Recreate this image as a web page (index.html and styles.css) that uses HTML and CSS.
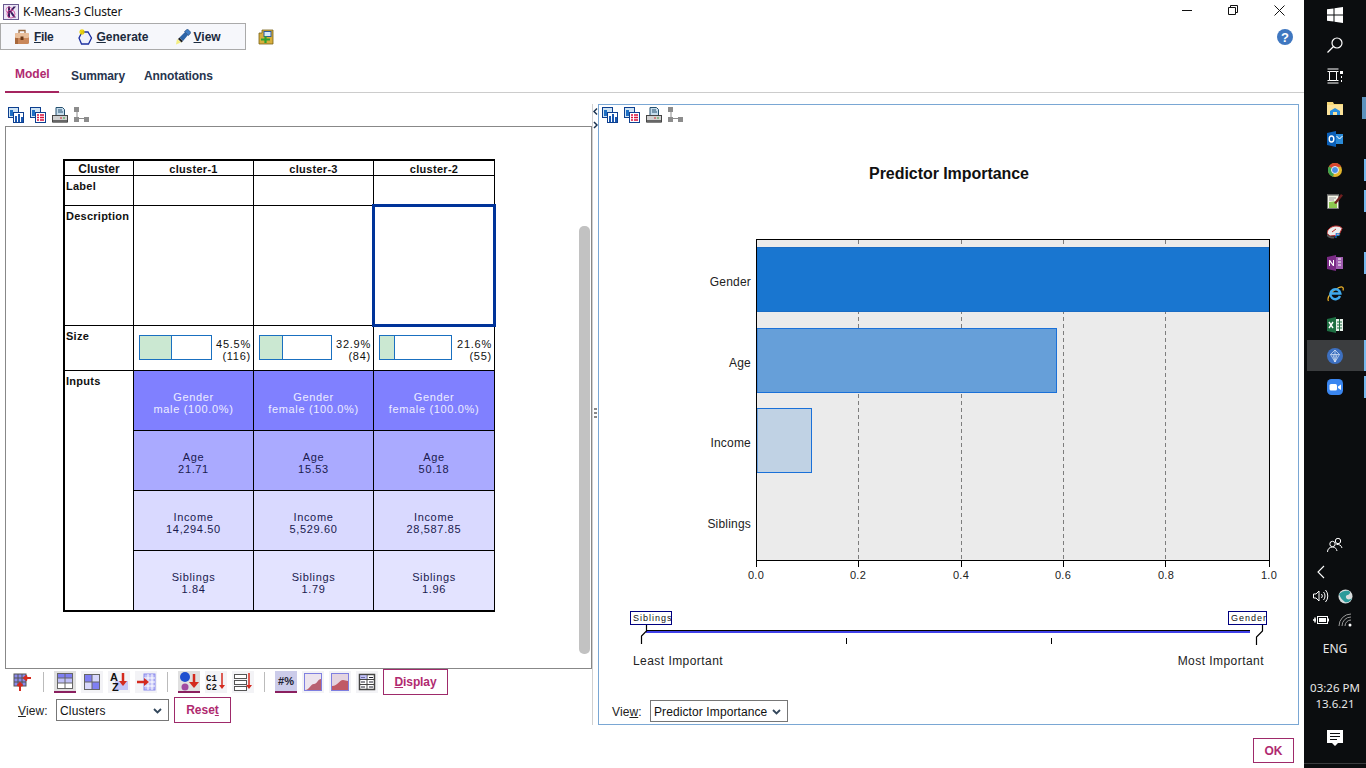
FILE: index.html
```html
<!DOCTYPE html>
<html lang="en">
<head>
<meta charset="utf-8">
<title>K-Means-3 Cluster</title>
<link rel="stylesheet" href="styles.css">
</head>
<body>
<svg class="defs" width="0" height="0">
  <symbol id="i-chart" viewBox="0 0 16 16">
    <rect x=".5" y=".5" width="10" height="10" fill="#cfe4f4" stroke="#0d3f8f"/>
    <rect x="2" y="3" width="3" height="6" fill="#1e6fc4"/>
    <rect x="5.500" y="5.500" width="10" height="10" fill="#fff" stroke="#0d3f8f"/>
    <rect x="7" y="9" width="2" height="6" fill="#1a58b0"/><rect x="10" y="7" width="2" height="8" fill="#1a58b0"/><rect x="13" y="10" width="2" height="5" fill="#1a58b0"/>
  </symbol>
  <symbol id="i-table" viewBox="0 0 16 16">
    <rect x=".5" y=".5" width="10" height="10" fill="#cfe4f4" stroke="#0d3f8f"/>
    <rect x="2" y="3" width="3" height="6" fill="#1e6fc4"/>
    <rect x="5.500" y="5.500" width="10" height="10" fill="#fff" stroke="#0d3f8f"/>
    <path d="M7 8h2M10 8h4M7 10.500h2M10 10.500h4M7 13h2M10 13h4" stroke="#d8103c" stroke-width="1.500"/>
  </symbol>
  <symbol id="i-print" viewBox="0 0 16 16">
    <path d="M4 .5h6.500l2 2v6H4z" fill="#c6dcec" stroke="#24506f"/>
    <path d="M6 3h4M6 5h5" stroke="#24506f"/>
    <rect x=".5" y="8.500" width="15" height="6.500" fill="#d0d0d0" stroke="#444"/>
    <rect x="1" y="13" width="14" height="2.500" fill="#666"/>
    <path d="M8 11h2" stroke="#d03030"/><path d="M11 11h2" stroke="#40a040"/>
  </symbol>
  <symbol id="i-tree" viewBox="0 0 16 16">
    <path d="M3 3v10M3 11.500h10" stroke="#8c8c8c" fill="none"/>
    <rect x="0" y="0" width="5" height="5" fill="#8c8c8c"/><rect x="0" y="10" width="5" height="5" fill="#8c8c8c"/><rect x="10" y="10" width="5" height="5" fill="#8c8c8c"/>
  </symbol>
  <symbol id="i-area" viewBox="0 0 22 22">
    <rect x="2.500" y="2.500" width="17" height="17" fill="#ece4ee" stroke="#7f7fe0"/>
    <path d="M3 19c5 0 5-6 9-6 3 0 4-5 7-5v11z" fill="#b86070"/>
  </symbol>
  <symbol id="i-area2" viewBox="0 0 22 22">
    <rect x="2.500" y="2.500" width="17" height="17" fill="#e4d4e0" stroke="#7f7fe0"/>
    <path d="M3 19V15c6 0 7-6 11-6 2 0 3 1 5 1v9z" fill="#c05a66"/>
  </symbol>
</svg>

<div class="app">
  <header class="titlebar">
    <svg class="app-icon" width="16" height="16" viewBox="0 0 16 16"><rect x=".5" y=".5" width="15" height="15" fill="#ece6f6" stroke="#6a5a90"/><path d="M5 2.500h2v4.500l3.500-4.500H13L8.800 7.500 13 13.500h-2.500L7 8.500v5H5z" fill="#3a2060"/><circle cx="8" cy="10" r="4" fill="none" stroke="#d04090" stroke-width=".8"/><circle cx="6" cy="6" r="3" fill="none" stroke="#d04090" stroke-width=".6"/></svg>
    <span class="title-text">K-Means-3 Cluster</span>
    <div class="win-controls">
      <span class="win-btn"><svg width="10" height="10" viewBox="0 0 10 10"><path d="M0 5.500h10" stroke="#111"/></svg></span>
      <span class="win-btn"><svg width="10" height="10" viewBox="0 0 10 10"><path d="M2.500 2V.5h7v7H8M.5 2.500h7v7h-7z" fill="none" stroke="#111"/></svg></span>
      <span class="win-btn"><svg width="11" height="11" viewBox="0 0 11 11"><path d="M.5.5l10 10M10.500.5l-10 10" stroke="#111"/></svg></span>
    </div>
  </header>

  <div class="menurow">
    <nav class="menubox">
      <span class="menu-item menu-file">
        <svg width="16" height="16" viewBox="0 0 16 16"><path d="M5 5V1.500h6V5" fill="none" stroke="#9a6a40" stroke-width="1.300"/><rect x="1" y="4" width="14" height="11" rx="1.500" fill="#c9875a"/><rect x="1" y="4" width="14" height="5" rx="1.500" fill="#e9bf9c"/><rect x="6.500" y="7.500" width="3" height="3.500" fill="#6a3a18"/><rect x="1" y="9" width="3" height="6" fill="#a8683c"/></svg>
        <span><u>F</u>ile</span>
      </span>
      <span class="menu-item menu-gen">
        <svg width="16" height="16" viewBox="0 0 16 16"><path d="M5 3h6l3.500 6-3 6H4.500L2 9z" fill="#eef1fb" stroke="#1b2fa0" stroke-width="1.300"/><path d="M5 0v6M2 3h6M3 1l4 4M7 1L3 5" stroke="#e8d000" stroke-width="1.100"/></svg>
        <span><u>G</u>enerate</span>
      </span>
      <span class="menu-item">
        <svg width="16" height="16" viewBox="0 0 16 16"><path d="M1 15.500L2 10l4 3.500z" fill="#f4ee80"/><path d="M3 10l3.500 3.500 1.500-1.500-3.500-3.500z" fill="#222"/><path d="M4.500 8.500L10 3l3 3-5 6z" fill="#2c64a8"/><path d="M9.500 2.500L12.500 0 16 3.500l-2.500 3z" fill="#3d7cc4" stroke="#183c70" stroke-width=".6"/></svg>
        <span><u>V</u>iew</span>
      </span>
    </nav>
    <svg class="add-icon" width="16" height="16" viewBox="0 0 16 16"><path d="M1 4h3V1h11v14H1z" fill="#d8ae3c" stroke="#7a6218" stroke-width=".8"/><rect x="6" y="2.500" width="7" height="5" fill="#d8eaf8" stroke="#2a5aa0"/><path d="M3 10.500h9M7.500 7v7" stroke="#2ea030" stroke-width="2.200"/></svg>
    <svg class="help-icon" width="16" height="16" viewBox="0 0 16 16"><circle cx="8" cy="8" r="8" fill="#3f77c0"/><text x="8" y="12.500" class="help-mark">?</text></svg>
  </div>

  <div class="tabs">
    <span class="tab tab-active">Model</span>
    <span class="tab">Summary</span>
    <span class="tab tab-last">Annotations</span>
  </div>

  <main class="workspace">
    <section class="left-col">
      <div class="view-tools">
        <svg class="ti"><use href="#i-chart"/></svg>
        <svg class="ti"><use href="#i-table"/></svg>
        <svg class="ti"><use href="#i-print"/></svg>
        <svg class="ti"><use href="#i-tree"/></svg>
      </div>
      <div class="frame">
        <div class="cluster-grid">
          <div class="c hd hd-main">Cluster</div>
          <div class="c hd">cluster-1</div>
          <div class="c hd">cluster-3</div>
          <div class="c hd">cluster-2</div>

          <div class="c rowname">Label</div>
          <div class="c"></div><div class="c"></div><div class="c"></div>

          <div class="c rowname">Description</div>
          <div class="c"></div><div class="c"></div><div class="c selected"></div>

          <div class="c rowname">Size</div>
          <div class="c size"><div class="sizebar"><div class="sizefill" style="width:45.5%"></div></div><div class="sizetext">45.5%<br>(116)</div></div>
          <div class="c size"><div class="sizebar"><div class="sizefill" style="width:32.9%"></div></div><div class="sizetext">32.9%<br>(84)</div></div>
          <div class="c size"><div class="sizebar"><div class="sizefill" style="width:21.6%"></div></div><div class="sizetext">21.6%<br>(55)</div></div>

          <div class="c rowname inputs-name">Inputs</div>
          <div class="c val v1">Gender<br>male (100.0%)</div>
          <div class="c val v1">Gender<br>female (100.0%)</div>
          <div class="c val v1">Gender<br>female (100.0%)</div>
          <div class="c val v2">Age<br>21.71</div>
          <div class="c val v2">Age<br>15.53</div>
          <div class="c val v2">Age<br>50.18</div>
          <div class="c val v3">Income<br>14,294.50</div>
          <div class="c val v3">Income<br>5,529.60</div>
          <div class="c val v3">Income<br>28,587.85</div>
          <div class="c val v4">Siblings<br>1.84</div>
          <div class="c val v4">Siblings<br>1.79</div>
          <div class="c val v4">Siblings<br>1.96</div>
        </div>
        <div class="scrollbar"></div>
      </div>

      <div class="bar-tools">
        <span class="tb"><svg width="18" height="18" viewBox="0 0 18 18"><rect x="1" y="1" width="12" height="12" fill="#8a8aec" stroke="#555"/><path d="M5 1v12M9 1v12M1 5h12M1 9h12" stroke="#555"/><path d="M18 5h-6M14 2.500L11 5l3 2.500M7 18v-7M4.500 13L7 10l2.500 3" stroke="#d42a1e" stroke-width="2" fill="none"/></svg></span>
        <span class="tsep"></span>
        <span class="tb tb-on"><svg width="18" height="18" viewBox="0 0 18 18"><rect x="1.500" y="1.500" width="15" height="15" fill="#fff" stroke="#666"/><rect x="2" y="2" width="14" height="4" fill="#7f7ff2"/><rect x="2" y="6" width="14" height="5" fill="#c0c0f8"/><path d="M1.500 6h15M1.500 11h15M9 1.500v15" stroke="#666"/></svg></span>
        <span class="tb"><svg width="18" height="18" viewBox="0 0 18 18"><rect x="1.500" y="1.500" width="15" height="15" fill="#d8d8fc" stroke="#666"/><rect x="2" y="2" width="7" height="7" fill="#7f7ff2"/><rect x="9" y="9" width="7" height="7" fill="#7f7ff2"/><path d="M1.500 9h15M9 1.500v15" stroke="#666"/></svg></span>
        <span class="tb"><svg width="20" height="20" viewBox="0 0 20 20"><rect x="6" y="9" width="13" height="9" fill="#c4c4f6"/><text x="1" y="9" class="tb-txt-lg">A</text><text x="3" y="19" class="tb-txt-lg">Z</text><path d="M14 1v11" stroke="#d42a1e" stroke-width="2.500"/><path d="M10 9l4 5 4-5z" fill="#d42a1e"/></svg></span>
        <span class="tb"><svg width="20" height="20" viewBox="0 0 20 20"><rect x="8" y="2" width="11" height="16" fill="#bfbff6" stroke="#8a8aec"/><path d="M8 6h11M8 10h11M8 14h11M12 2v16M16 2v16" stroke="#fff"/><path d="M1 10h10" stroke="#d42a1e" stroke-width="2.500"/><path d="M8 6l5 4-5 4z" fill="#d42a1e"/></svg></span>
        <span class="tsep"></span>
        <span class="tb tb-on"><svg width="20" height="20" viewBox="0 0 20 20"><circle cx="6" cy="6" r="5" fill="#2050d0"/><circle cx="6" cy="16" r="3.500" fill="#a04aa0"/><path d="M15 3v10" stroke="#d42a1e" stroke-width="2.500"/><path d="M10 11l5 6 5-6z" fill="#d42a1e"/></svg></span>
        <span class="tb"><svg width="20" height="20" viewBox="0 0 20 20"><text x="0" y="9" class="tb-txt">C1</text><text x="0" y="18" class="tb-txt">C2</text><path d="M16 1v14" stroke="#d42a1e" stroke-width="1.500"/><path d="M13 13l3 4 3-4z" fill="#d42a1e"/></svg></span>
        <span class="tb"><svg width="20" height="20" viewBox="0 0 20 20"><g fill="#fff" stroke="#555"><rect x="1.500" y="2.500" width="12" height="4"/><rect x="1.500" y="8.500" width="12" height="4"/><rect x="1.500" y="14.500" width="12" height="4"/></g><path d="M16 1v14" stroke="#d42a1e" stroke-width="1.500"/><path d="M13 13l3 4 3-4z" fill="#d42a1e"/></svg></span>
        <span class="tsep"></span>
        <span class="tb tb-on tb-pct"><span class="pct">#%</span></span>
        <span class="tb"><svg width="22" height="22"><use href="#i-area"/></svg></span>
        <span class="tb"><svg width="22" height="22"><use href="#i-area2"/></svg></span>
        <span class="tb"><svg width="20" height="20" viewBox="0 0 20 20"><rect x="2.500" y="2.500" width="15" height="15" fill="#fff" stroke="#444" stroke-width="1.500"/><path d="M10 3v14M3 7.500h14M3 12.500h14" stroke="#444"/><path d="M4 5.500h4M12 5.500h4M4 10h4M12 10h4M4 15h4M12 15h4" stroke="#223"/><rect x="3" y="3" width="7" height="4" fill="#9a9af0" opacity=".6"/></svg></span>
        <button class="btn btn-display"><u>D</u>isplay</button>
      </div>
      <div class="view-row">
        <span class="view-label"><u>V</u>iew:</span>
        <div class="select select-left"><span>Clusters</span><svg width="9" height="6" viewBox="0 0 9 6"><path d="M1 1l3.500 3.500L8 1" fill="none" stroke="#33475b" stroke-width="1.800"/></svg></div>
        <button class="btn btn-reset">Rese<u>t</u></button>
      </div>
    </section>

    <div class="splitter">
      <svg class="split-arrows" width="5" height="25" viewBox="0 0 5 25"><path d="M4 4.500L1 7.500l3 3M1 18l3 3-3 3" fill="none" stroke="#1b3350" stroke-width="1.500"/></svg>
      <div class="grip"></div>
    </div>

    <section class="right-panel">
      <div class="view-tools view-tools-r">
        <svg class="ti"><use href="#i-chart"/></svg>
        <svg class="ti"><use href="#i-table"/></svg>
        <svg class="ti"><use href="#i-print"/></svg>
        <svg class="ti"><use href="#i-tree"/></svg>
      </div>
      <svg class="chart" width="699" height="565" viewBox="599 130 699 565">
        <text x="949" y="179" class="chart-title">Predictor Importance</text>
        <rect x="756.500" y="239.500" width="513" height="321" fill="#ebebeb"/>
        <path d="M858.500 240v320M961.500 240v320M1063.500 240v320M1165.500 240v320" stroke="#7d7d7d" stroke-dasharray="4 3"/>
        <rect x="757" y="247.500" width="512" height="64" fill="#1976d0" stroke="#1a6cc4"/>
        <rect x="757" y="328.500" width="299.500" height="64" fill="#669fd9" stroke="#1a70d8"/>
        <rect x="757" y="408.500" width="54.500" height="64" fill="#c0d2e4" stroke="#1a70d8"/>
        <rect x="756.500" y="239.500" width="513" height="321" fill="none" stroke="#000"/>
        <path d="M756.500 560v7M858.500 560v7M961.500 560v7M1063.500 560v7M1165.500 560v7M1269.500 560v7" stroke="#000"/>
        <g class="cat">
          <text x="751" y="286">Gender</text>
          <text x="751" y="367">Age</text>
          <text x="751" y="447">Income</text>
          <text x="751" y="528">Siblings</text>
        </g>
        <g class="axis">
          <text x="756" y="579">0.0</text>
          <text x="858" y="579">0.2</text>
          <text x="961" y="579">0.4</text>
          <text x="1063" y="579">0.6</text>
          <text x="1166" y="579">0.8</text>
          <text x="1269" y="579">1.0</text>
        </g>
        <rect x="646" y="630" width="604" height="1" fill="#000"/>
        <rect x="646" y="631" width="604" height="2" fill="#4040e8"/>
        <path d="M846.500 638v6M1051.500 638v6" stroke="#000"/>
        <path d="M646.500 625v6l-5 5v8M1262.500 625v6l-6 6v8" fill="none" stroke="#000" stroke-width="1.200"/>
        <rect x="630.500" y="611.500" width="41" height="13" fill="#fff" stroke="#000080"/>
        <text x="633" y="621" class="tag">Siblings</text>
        <rect x="1228.500" y="611.500" width="38" height="13" fill="#fff" stroke="#000080"/>
        <text x="1231" y="621" class="tag">Gender</text>
        <text x="633" y="665" class="scale-lbl">Least Important</text>
        <text x="1264" y="665" class="scale-lbl scale-end">Most Important</text>
      </svg>
      <div class="view-row view-row-r">
        <span class="view-label">Vie<u>w</u>:</span>
        <div class="select select-right"><span>Predictor Importance</span><svg width="9" height="6" viewBox="0 0 9 6"><path d="M1 1l3.500 3.500L8 1" fill="none" stroke="#33475b" stroke-width="1.800"/></svg></div>
      </div>
    </section>
  </main>

  <footer class="footer"><button class="btn btn-ok">OK</button></footer>
</div>

<aside class="taskbar">
  <div class="tk tk-s"><svg width="16" height="16" viewBox="0 0 16 16"><path d="M0 2.300l6.500-.9V7.500H0zM7.500 1.200L16 0v7.500H7.500zM0 8.500h6.500v6.100L0 13.700zM7.500 8.500H16V16l-8.500-1.200z" fill="#fff"/></svg></div>
  <div class="tk tk-s"><svg width="16" height="16" viewBox="0 0 16 16"><circle cx="10" cy="6" r="5" fill="none" stroke="#fff" stroke-width="1.200"/><path d="M6.500 9.500L.5 15.500" stroke="#fff" stroke-width="1.300"/></svg></div>
  <div class="tk tk-s"><svg width="16" height="16" viewBox="0 0 16 16"><path d="M.5 1h11M.5 15h11M2.500 3.500h7v9h-7zM.5 3.500h2M.5 12.500h2M9.500 3.500h2M9.500 12.500h2" fill="none" stroke="#fff"/><rect x="13" y="3" width="3" height="3" fill="#fff"/><path d="M14.500 8v2M14.500 12v2" stroke="#fff"/></svg></div>
  <div class="tk tk-open tk-wide"><svg width="16" height="16" viewBox="0 0 16 16"><path d="M0 2h6l1 2h9v11H0z" fill="#f6d777"/><path d="M0 5h16v10H0z" fill="#fbe29a"/><path d="M3 15v-4l5-3 5 3v4h-3v-3H6v3z" fill="#2a8fe0"/></svg></div>
  <div class="tk"><svg width="16" height="16" viewBox="0 0 16 16"><rect x="7" y="3" width="9" height="10" fill="#2a8ad8"/><path d="M9.500 5l3 3 3-3" fill="none" stroke="#fff"/><path d="M0 2l9-2v16l-9-2z" fill="#0a5fb8"/><ellipse cx="4.500" cy="8" rx="2.300" ry="3" fill="none" stroke="#fff" stroke-width="1.400"/></svg></div>
  <div class="tk tk-open"><svg width="16" height="16" viewBox="0 0 16 16"><circle cx="8" cy="8" r="7" fill="#e2b52c"/><path d="M8 8L2 4.500A7 7 0 0 1 14.200 4.800L8 5z" fill="#d9452f"/><path d="M8 8L2 4.500A7 7 0 0 0 6 14.800z" fill="#3da350"/><circle cx="8" cy="8" r="3.500" fill="#4a8fe8" stroke="#eee"/></svg></div>
  <div class="tk tk-open"><svg width="16" height="16" viewBox="0 0 16 16"><path d="M.5 1.500h11v14H.5z" fill="#f6f6e8" stroke="#777"/><path d="M2 1v2M4 1v2M6 1v2M8 1v2M10 1v2" stroke="#444"/><path d="M2 5h7M2 7h5" stroke="#999"/><path d="M2 15V9l8-1v7z" fill="#8cc850"/><path d="M7 10l7-9 2 1.500L9 11z" fill="#702020"/></svg></div>
  <div class="tk"><svg width="16" height="16" viewBox="0 0 16 16"><path d="M0 9.500C0 5 5 2 9 2c3 0 5.500 1 6 2.500L12 11l-9 1z" fill="#ececec" stroke="#c03030"/><path d="M0 10c3 3 6 3 8 2l-1 2.500c-3 0-6-.5-7-2.500z" fill="#555"/><path d="M5 8l4-3" stroke="#c03030"/><text x="8" y="13.500" class="tk-p">P</text></svg></div>
  <div class="tk tk-open"><svg width="16" height="16" viewBox="0 0 16 16"><path d="M0 2l9-2v16l-9-2z" fill="#7a2b85"/><rect x="9" y="2" width="7" height="12" fill="#a05cb0"/><path d="M2 11V5h1l3 4V5h1v6H6L3 7v4z" fill="#fff"/><path d="M11 4h3M11 7h3M11 10h3" stroke="#fff"/></svg></div>
  <div class="tk"><svg width="17" height="17" viewBox="0 0 17 17"><path d="M1.500 16C-.500 13 4 6 12 2.500c3-1.300 5-.5 4 3" fill="none" stroke="#f0b428" stroke-width="1.200"/><path d="M4.500 8.500h8.500M13 11a5 5 0 1 1 .3-2.500H13" fill="none" stroke="#3fa9ec" stroke-width="2.500"/></svg></div>
  <div class="tk"><svg width="16" height="16" viewBox="0 0 16 16"><path d="M0 2l9-2v16l-9-2z" fill="#1e6f42"/><rect x="9" y="2" width="7" height="12" fill="#e8f2ea"/><path d="M2 5l4 6M6 5l-4 6" stroke="#fff" stroke-width="1.400"/><path d="M10 5h5M10 8h5M10 11h5M12.500 2v12" stroke="#1e6f42"/></svg></div>
  <div class="tk tk-open tk-active"><svg width="16" height="16" viewBox="0 0 16 16"><circle cx="8" cy="8" r="8" fill="#3d70c0"/><path d="M8 2l4.500 4.500L8 14 3.500 6.500zM3.500 6.500h9M8 2v12M6 6.500L8 14l2-7.500" fill="none" stroke="#dbe6f6" stroke-width=".7"/></svg></div>
  <div class="tk tk-open"><svg width="16" height="16" viewBox="0 0 16 16"><rect width="16" height="16" rx="4.500" fill="#3a86f0"/><rect x="2.500" y="5" width="7.500" height="6.500" rx="1.500" fill="#fff"/><path d="M11 7.500l3-2v5.500l-3-2z" fill="#fff"/></svg></div>

  <div class="tray">
    <div class="tray-row tray-people"><svg width="16" height="16" viewBox="0 0 16 16"><circle cx="11" cy="4" r="2.700" fill="none" stroke="#fff"/><circle cx="5.500" cy="7" r="2.700" fill="none" stroke="#fff"/><path d="M.5 15c0-3 2-5 5-5s4 2 4.500 4M9.500 7.500c2.500-.5 5 1 5.500 3.500" fill="none" stroke="#fff"/></svg></div>
    <div class="tray-row tray-icons"><span class="tray-cell"><svg width="8" height="14" viewBox="0 0 8 14"><path d="M7 1L1 7l6 6" fill="none" stroke="#fff" stroke-width="1.100"/></svg></span></div>
    <div class="tray-row tray-icons">
      <span class="tray-cell"><svg width="16" height="14" viewBox="0 0 16 14"><path d="M.5 5h2.500l3-3v10l-3-3H.5z" fill="none" stroke="#fff"/><path d="M8.500 5a3 3 0 0 1 0 4M10.500 3a6 6 0 0 1 0 8M12.500 1a9 9 0 0 1 0 12" fill="none" stroke="#fff"/></svg></span>
      <span class="tray-cell"><svg width="15" height="15" viewBox="0 0 15 15"><circle cx="7.500" cy="7.500" r="7" fill="#d8dcdc"/><path d="M1 5c3-3 7-4 10-3 2 1 1 3-1 4-2 0-3 2-1 4 2 1 4 0 5-1-1 3-4 5-7 4C4 11 2 8 1 5z" fill="#2a9a9a"/></svg></span>
    </div>
    <div class="tray-row tray-icons">
      <span class="tray-cell"><svg width="16" height="12" viewBox="0 0 16 12"><rect x="4.500" y="2.500" width="10" height="7" fill="#0b0d0f" stroke="#fff"/><rect x="6" y="4" width="7" height="4" fill="#fff"/><path d="M0 6h3M2 3.500v5" stroke="#fff" stroke-width="1.500"/><rect x="14.500" y="4.500" width="1.500" height="3" fill="#fff"/></svg></span>
      <span class="tray-cell"><svg width="14" height="14" viewBox="0 0 14 14"><g fill="none" stroke="#9a9a9a"><path d="M1 13a12 12 0 0 1 12-12"/><path d="M4 13a9 9 0 0 1 9-9"/><path d="M7 13a6 6 0 0 1 6-6"/></g><circle cx="12" cy="12" r="1.500" fill="#fff"/></svg></span>
    </div>
    <div class="tray-lang">ENG</div>
    <div class="tray-clock">03:26 PM<br>13.6.21</div>
    <div class="tray-row tray-notif"><svg width="16" height="17" viewBox="0 0 16 17"><path d="M0 0h16v13h-5l-3 3-3-3H0z" fill="#fff"/><path d="M3 3.500h10M3 6.500h10M3 9.500h7" stroke="#0b0d0f"/></svg></div>
    <div class="tray-end"></div>
  </div>
</aside>
</body>
</html>
```
FILE: styles.css
```css
* { box-sizing: border-box; }
html, body { margin: 0; padding: 0; height: 768px; overflow: hidden; }
body { display: flex; width: 1366px; background: #fff; font-family: "Liberation Sans", Arial, sans-serif; color: #111; }
.defs { position: absolute; }
.app { width: 1304px; height: 768px; display: flex; flex-direction: column; background: #fff; }

/* title bar */
.titlebar { height: 22px; display: flex; align-items: flex-start; }
.app-icon { margin: 4px 0 0 3px; }
.title-text { margin: 4px 0 0 4px; font: 12px/16px "Noto Sans", sans-serif; letter-spacing: -.2px; color: #111; }
.win-controls { margin-left: auto; display: flex; padding-right: 2px; }
.win-btn { width: 46px; height: 20px; display: flex; align-items: center; justify-content: center; }

/* menu */
.menurow { height: 30px; display: flex; align-items: flex-start; }
.menubox { width: 246px; height: 27px; margin-top: 1px; padding-left: 13px; display: flex; align-items: center; gap: 26px; border: 1px solid #aaa; background: #f6f7fb; }
.menu-item { display: flex; align-items: center; gap: 3px; font: bold 12px/16px "Liberation Sans", sans-serif; color: #1b2a3d; }
.menu-file { gap: 4px; letter-spacing: -.3px; margin-right: -2px; }
.add-icon { margin: 7px 0 0 12px; }
.help-icon { margin: 7px 11px 0 auto; }
.help-mark { font: bold 13px "Liberation Sans", sans-serif; fill: #fff; text-anchor: middle; }

/* tabs */
.tabs { height: 41px; margin-left: 5px; display: flex; border-bottom: 1px solid #ccc; }
.tab { padding: 17px 0 0; margin-left: 12px; font: bold 12px/14px "Liberation Sans", sans-serif; letter-spacing: -.1px; color: #27354f; }
.tab-last { margin-left: 19px; }
.tab-active { margin-left: 0; width: 54px; height: 41px; padding: 15px 0 0 10px; letter-spacing: 0; color: #b02a70; border-bottom: 2px solid #a5245f; }

/* workspace */
.workspace { height: 632px; padding: 11px 0 0 5px; display: flex; align-items: flex-start; }
.left-col { width: 587px; display: flex; flex-direction: column; }
.view-tools { height: 22px; padding: 3px 0 0 3px; display: flex; gap: 6px; }
.view-tools-r { height: 25px; padding: 2px 0 0 3px; }
.ti { width: 16px; height: 16px; }
.frame { height: 543px; padding: 32px 1px 0 57px; display: flex; justify-content: space-between; border: 1px solid #888; }
.scrollbar { width: 11px; height: 428px; margin-top: 67px; border-radius: 5px; background: #c2c2c2; }

/* cluster table */
.cluster-grid { width: 432px; height: 453px; display: grid; grid-template-columns: 68px 119px 119px 120px; grid-template-rows: 14px 29px 119px 44px 59px 59px 59px 59px; gap: 1px; background: #000; border: 2px solid #000; }
.c { background: #fff; font-size: 11px; line-height: 12px; }
.hd { display: flex; align-items: center; justify-content: center; padding-top: 2px; font-weight: bold; letter-spacing: .3px; }
.hd-main { font-size: 12px; letter-spacing: 0; }
.rowname { padding: 4px 0 0 1px; font-weight: bold; letter-spacing: .25px; }
.inputs-name { grid-row: span 4; }
.selected { position: relative; z-index: 1; outline: 3px solid #003399; outline-offset: -1px; }
.size { display: flex; justify-content: space-between; padding: 9px 2px 0 5px; }
.sizebar { width: 73px; height: 25px; border: 1px solid #1a70c0; background: #fff; }
.sizefill { height: 100%; background: #cbe8d2; border-right: 1px solid #1a70c0; }
.sizetext { margin-top: 3px; text-align: right; letter-spacing: .75px; color: #111; }
.val { padding-top: 20px; text-align: center; letter-spacing: .65px; color: #1a1a4e; }
.v1 { background: #8080ff; color: #ececff; }
.v2 { background: #aaaaff; }
.v3 { background: #d9d9ff; }
.v4 { background: #e3e3ff; }

/* bottom tools */
.bar-tools { height: 26px; padding-left: 6px; display: flex; align-items: center; gap: 5px; }
.tb { width: 22px; height: 22px; display: flex; align-items: center; justify-content: center; background: #f3f3f6; }
.tb:first-child { background: transparent; }
.tb-on { background: #e0e0e0; border-bottom: 2px solid #8a1f5f; }
.tb-txt { font: bold 9px "Liberation Mono", monospace; fill: #111; }
.tb-txt-lg { font: bold 11px "Liberation Sans", sans-serif; fill: #111; }
.pct { font: bold 11px "Liberation Sans", sans-serif; color: #223; }
.tb-pct { background: #ccccea; }
.tsep { width: 1px; height: 20px; margin: 0 5px; background: #bbb; }
.btn { font: bold 12px/14px "Liberation Sans", sans-serif; color: #b02a70; background: #fff; border: 1px solid #9e2a6a; padding: 0; border-radius: 0; }
.btn-display { width: 65px; height: 26px; letter-spacing: -.1px; }
.view-row { display: flex; align-items: center; font-size: 12px; color: #222; }
.left-col .view-row { height: 26px; margin-top: 2px; padding-left: 13px; }
.view-label { width: 38px; padding-top: 1px; letter-spacing: .1px; }
.select { height: 22px; display: flex; align-items: center; justify-content: space-between; padding: 1px 4px 0 3px; border: 1px solid #777; background: #fff; font-size: 12px; letter-spacing: .2px; color: #111; }
.select-left { width: 113px; padding-right: 6px; }
.select-right { width: 138px; padding-right: 6px; letter-spacing: .1px; }
.btn-reset { width: 57px; height: 26px; margin-left: 5px; }

/* splitter */
.splitter { width: 6px; height: 621px; display: flex; flex-direction: column; align-items: flex-start; border-left: 1px solid #d0d0d0; }
.grip { width: 3px; height: 12px; margin: 279px 0 0 1px; background: repeating-linear-gradient(#888 0 2px, #fff 2px 4px); }

/* right panel */
.right-panel { width: 701px; height: 621px; border: 1px solid #7aa7d4; }
.chart { display: block; }
.chart-title { font: bold 16px "Liberation Sans", sans-serif; letter-spacing: -.05px; text-anchor: middle; fill: #111; }
.cat text { font: 12px "Liberation Sans", sans-serif; letter-spacing: .2px; text-anchor: end; fill: #222; }
.axis text { font: 11px "Liberation Sans", sans-serif; letter-spacing: .3px; text-anchor: middle; fill: #222; }
.tag { font: 9px "Liberation Sans", sans-serif; letter-spacing: 1px; fill: #111; }
.scale-lbl { font: 12px "Liberation Sans", sans-serif; letter-spacing: .45px; fill: #222; }
.scale-end { text-anchor: end; }
.view-row-r { height: 29px; padding: 5px 0 0 13px; align-items: flex-start; }
.view-row-r .view-label { padding-top: 5px; }

/* footer */
.footer { padding: 13px 10px 0 0; display: flex; justify-content: flex-end; }
.btn-ok { width: 41px; height: 25px; }

/* taskbar */
.taskbar { width: 62px; height: 768px; display: flex; flex-direction: column; background: #0b0d0f; color: #e8e8e8; font: 12px/16px "Noto Sans", sans-serif; }
.tk { height: 31px; position: relative; display: flex; align-items: center; justify-content: center; }
.tk-s { height: 30px; }
.tk-s:nth-child(3) { height: 32px; }
.tk-open::after { content: ""; position: absolute; right: 0; top: 5px; width: 2px; height: 22px; background: #76b9ed; }
.tk-wide::after { width: 4px; background: #5c92bd; }
.tk-active { background: #3b3d3f; margin-left: 3px; padding-right: 3px; }
.tk-active::after { top: 0; height: 31px; }
.tray { margin-top: auto; display: flex; flex-direction: column; }
.tray-row { height: 24px; display: flex; align-items: center; }
.tray-people { height: 27px; padding-top: 4px; align-items: flex-start; justify-content: center; }
.tray-icons { padding-left: 5px; }
.tray-cell { width: 24px; display: flex; justify-content: center; }
.tk-p { font: bold 8px "Liberation Sans", sans-serif; fill: #1e7fd0; }
.tray-lang { height: 24px; margin-top: 5px; text-align: center; line-height: 24px; }
.tray-clock { height: 32px; margin-top: 19px; font-size: 11.500px; text-align: center; }
.tray-notif { margin-top: 14px; justify-content: center; }
.tray-end { height: 1px; margin-top: 13px; margin-bottom: 4px; background: #3a3c3e; }
```
